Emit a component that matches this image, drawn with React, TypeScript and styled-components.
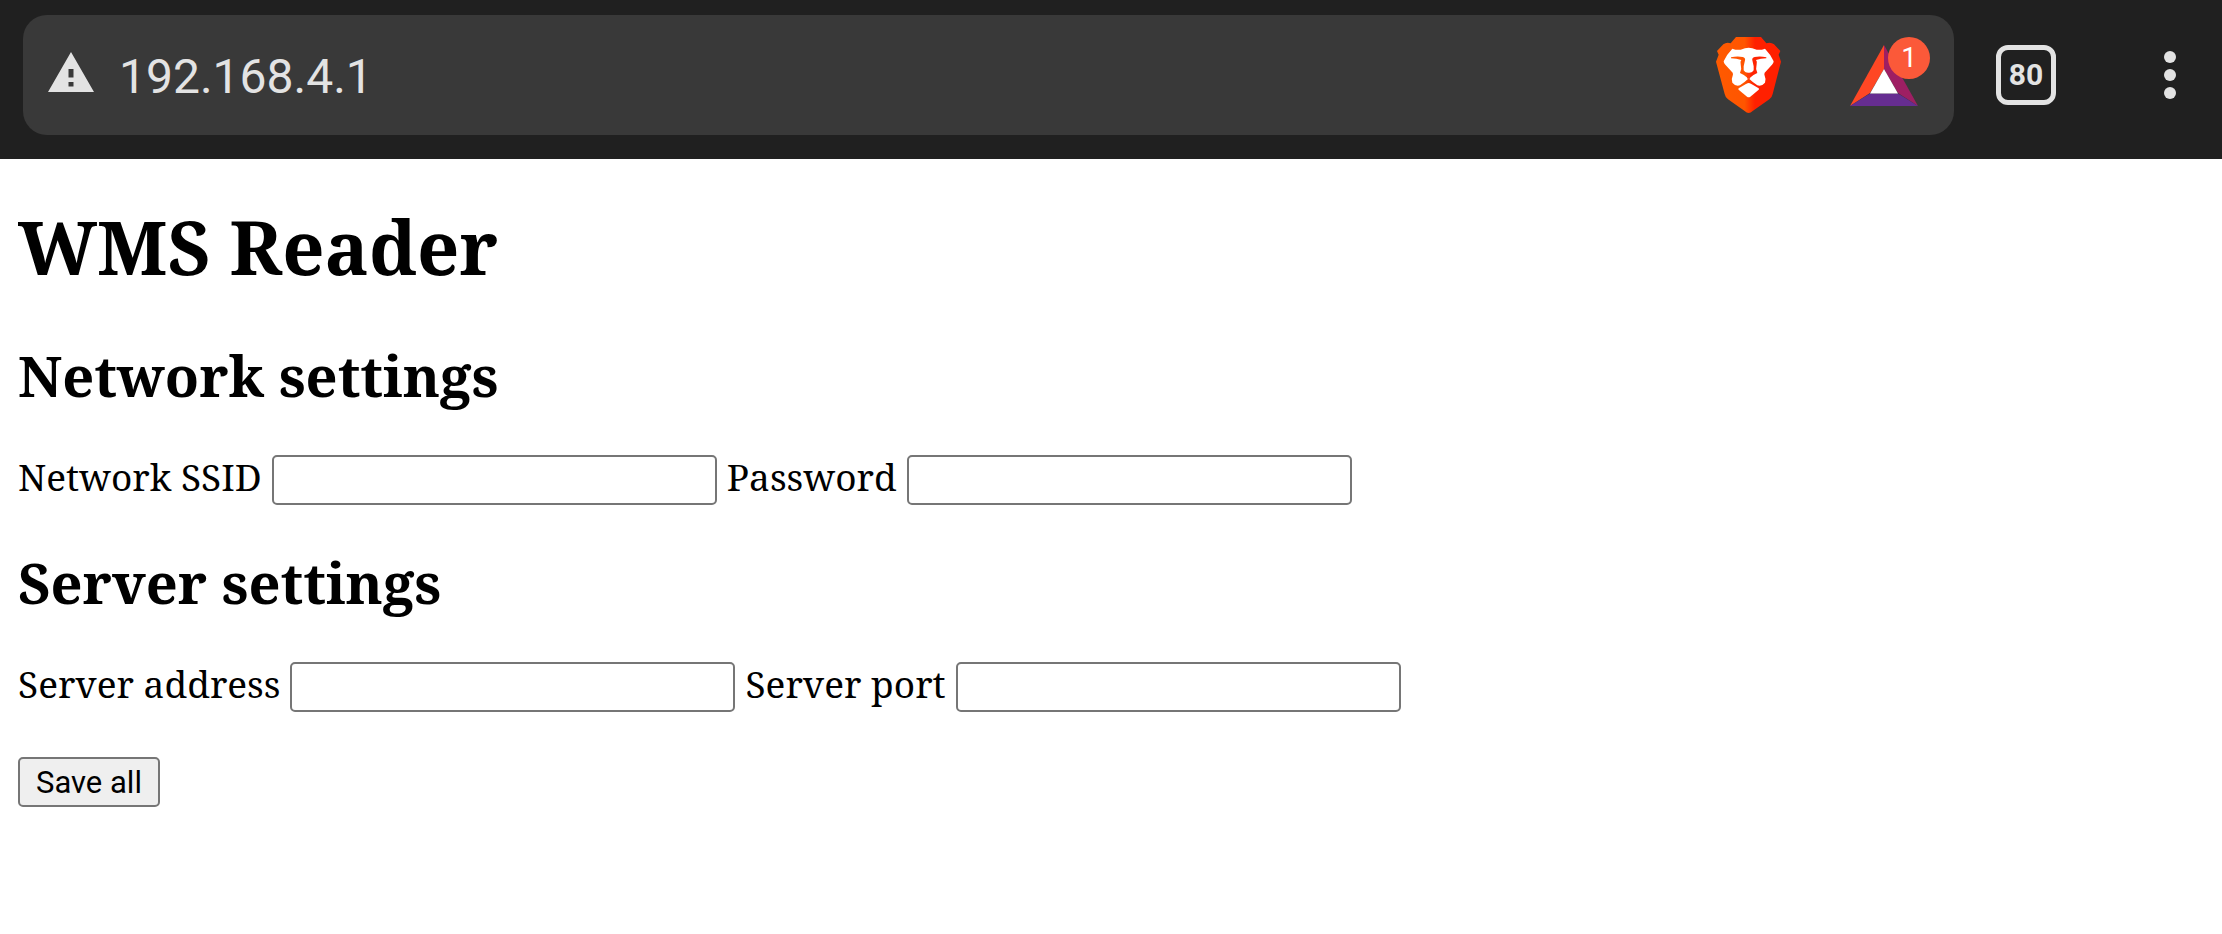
import React from 'react';
import styled, { createGlobalStyle } from 'styled-components';

const serif = '"Noto Serif", "DejaVu Serif Condensed", "DejaVu Serif", serif';
const sans = 'Roboto, "Liberation Sans", sans-serif';

const GlobalStyle = createGlobalStyle`
  *, *::before, *::after { box-sizing: border-box; }
  body { margin: 0; background: #fff; color: #000; }
`;

const Toolbar = styled.header`
  display: flex;
  align-items: flex-start;
  height: 159px;
  padding: 15px 22px 24px 23px;
  background: #202020;
  color: #e3e3e3;
  font-family: ${sans};
`;

const AddressBar = styled.div`
  display: flex;
  align-items: center;
  flex: 1;
  min-width: 0;
  height: 120px;
  padding: 0 36px 0 25px;
  border-radius: 24px;
  background: #393939;
`;

const IconButton = styled.button`
  display: flex;
  align-items: center;
  justify-content: center;
  flex: none;
  padding: 0;
  border: 0;
  background: none;
  color: inherit;
  font-family: inherit;
`;

const Address = styled.input`
  flex: 1;
  min-width: 0;
  height: 64px;
  margin: 0 24px 0 25px;
  padding: 2px 0 0;
  border: 0;
  outline: 0;
  background: none;
  color: inherit;
  font: 400 48px/62px ${sans};
`;

const Rewards = styled(IconButton)`
  position: relative;
  margin-left: 69px;
`;

const Badge = styled.span`
  position: absolute;
  top: -8px;
  right: -12px;
  width: 42px;
  height: 42px;
  border-radius: 50%;
  background: #fb5939;
  color: #fff;
  font-size: 28px;
  line-height: 42px;
  text-align: center;
`;

const TabCount = styled(IconButton)`
  width: 60px;
  height: 60px;
  margin: 30px 0 0 42px;
  padding-bottom: 2px;
  border: 5px solid #e3e3e3;
  border-radius: 12px;
  font-size: 30px;
  font-weight: 700;
`;

const MenuButton = styled(IconButton)`
  width: 60px;
  height: 60px;
  margin: 30px 0 0 84px;
`;

const Page = styled.main`
  padding: 48px 18px;
  font-family: ${serif};
  font-size: 37px;
`;

const Title = styled.h1`
  margin: 0 0 56px;
  font-size: 74px;
  line-height: 80px;
`;

const SectionTitle = styled.h2`
  margin: 0;
  font-size: 56px;
  line-height: 64px;
`;

const Section = styled.section`
  & + & {
    margin-top: 45px;
  }
`;

const Fields = styled.div`
  display: flex;
  flex-wrap: wrap;
  gap: 10px;
  margin-top: 48px;
`;

const Field = styled.label`
  display: flex;
  align-items: baseline;
  gap: 10px;
  line-height: 42px;
`;

const TextBox = styled.input`
  width: 445px;
  height: 50px;
  margin: 0;
  padding: 2px 6px;
  border: 2px solid #767676;
  border-radius: 5px;
  background: #fff;
  font: 400 31px ${sans};
`;

const SaveButton = styled.button`
  height: 50px;
  margin-top: 45px;
  padding: 0 16px;
  border: 2px solid #767676;
  border-radius: 5px;
  background: #efefef;
  color: #000;
  font: 400 31px ${sans};
`;

const WarningIcon = () => (
  <svg width="46" height="46" viewBox="0 0 46 46" aria-hidden="true">
    <path fillRule="evenodd" fill="currentColor" d="M23 0 46 40H0ZM20.500 17V25.500H25.500V17ZM20.500 30V34.500H25.500V30Z" />
  </svg>
);

const LionIcon = () => (
  <svg width="65" height="76" viewBox="78 81 195 228" aria-hidden="true">
    <defs>
      <linearGradient id="mane" x1="0" x2="1" y1="0" y2="0">
        <stop offset="0" stopColor="#ff5a00" />
        <stop offset=".44" stopColor="#ff5500" />
        <stop offset=".6" stopColor="#ff2000" />
        <stop offset="1" stopColor="#ff2000" />
      </linearGradient>
    </defs>
    <path fill="url(#mane)" d="M138 81H213L229 100Q242 95 252 103L271 123L266 134L273 155L248 252Q246 262 238 268L188 303Q176 315 164 303L114 268Q106 262 104 252L78 155L86 134L81 123L100 103Q110 95 122 100Z" />
    <path fill="#fff" d="M127 116Q140 121 152 119Q166 113 176 113Q186 113 200 119Q212 121 225 116Q241 132 251 154Q251 159 246 164L224 188Q222 192 224 197Q229 207 225 218Q214 231 202 226Q188 217 179 208Q176 204 173 208Q164 217 150 226Q138 231 127 218Q123 207 128 197Q130 192 128 188L106 164Q101 159 101 154Q111 132 127 116Z" />
    <path fill="#ff5300" d="M123 142Q142 137 158 141Q167 144 165 151L161 169L161 181Q164 187 174 189L176 206L172 203Q162 194 150 189Q156 176 152 162Q150 154 154 150Q140 146 123 145Z" />
    <path fill="#ff2300" d="M229 142Q210 137 194 141Q185 144 187 151L191 169L191 181Q188 187 178 189L176 206L180 203Q190 194 202 189Q196 176 200 162Q202 154 198 150Q212 146 229 145Z" />
    <path fill="#ff3b0c" d="M170 188H182L180 206H172Z" />
    <path fill="#fff" d="M176 219Q180 219 206 235Q208 237 206 239L181 260Q176 264 171 260L146 239Q144 237 146 235Q172 219 176 219Z" />
  </svg>
);

const TriangleIcon = () => (
  <svg width="68" height="61" viewBox="0 0 68 61" aria-hidden="true">
    <path fill="#ff4724" d="M34 0V24L20 48L0 61Z" />
    <path fill="#9e1f63" d="M34 0V24L48 48L68 61Z" />
    <path fill="#662d91" d="M0 61 20 48.500H48L68 61Z" />
    <path fill="#fff" d="M34 24 48 48.500H20Z" />
  </svg>
);

const DotsIcon = () => (
  <svg width="12" height="48" viewBox="0 0 12 48" fill="currentColor" aria-hidden="true">
    <circle cx="6" cy="6" r="6" />
    <circle cx="6" cy="24" r="6" />
    <circle cx="6" cy="42" r="6" />
  </svg>
);

const sections = [
  {
    title: 'Network settings',
    fields: [
      { label: 'Network SSID', name: 'ssid', type: 'text' },
      { label: 'Password', name: 'password', type: 'password' },
    ],
  },
  {
    title: 'Server settings',
    fields: [
      { label: 'Server address', name: 'address', type: 'text' },
      { label: 'Server port', name: 'port', type: 'text' },
    ],
  },
];

export default function App() {
  return (
    <>
      <GlobalStyle />
      <Toolbar>
        <AddressBar>
          <IconButton type="button" aria-label="Connection is not secure"><WarningIcon /></IconButton>
          <Address aria-label="Address" defaultValue="192.168.4.1" />
          <IconButton type="button" aria-label="Shields"><LionIcon /></IconButton>
          <Rewards type="button" aria-label="Rewards">
            <TriangleIcon />
            <Badge>1</Badge>
          </Rewards>
        </AddressBar>
        <TabCount type="button" aria-label="Open tabs">80</TabCount>
        <MenuButton type="button" aria-label="Menu"><DotsIcon /></MenuButton>
      </Toolbar>
      <Page>
        <Title>WMS Reader</Title>
        <form onSubmit={(event) => event.preventDefault()}>
          {sections.map((section) => (
            <Section key={section.title}>
              <SectionTitle>{section.title}</SectionTitle>
              <Fields>
                {section.fields.map((field) => (
                  <Field key={field.name}>
                    {field.label}
                    <TextBox type={field.type} name={field.name} />
                  </Field>
                ))}
              </Fields>
            </Section>
          ))}
          <SaveButton type="submit">Save all</SaveButton>
        </form>
      </Page>
    </>
  );
}
